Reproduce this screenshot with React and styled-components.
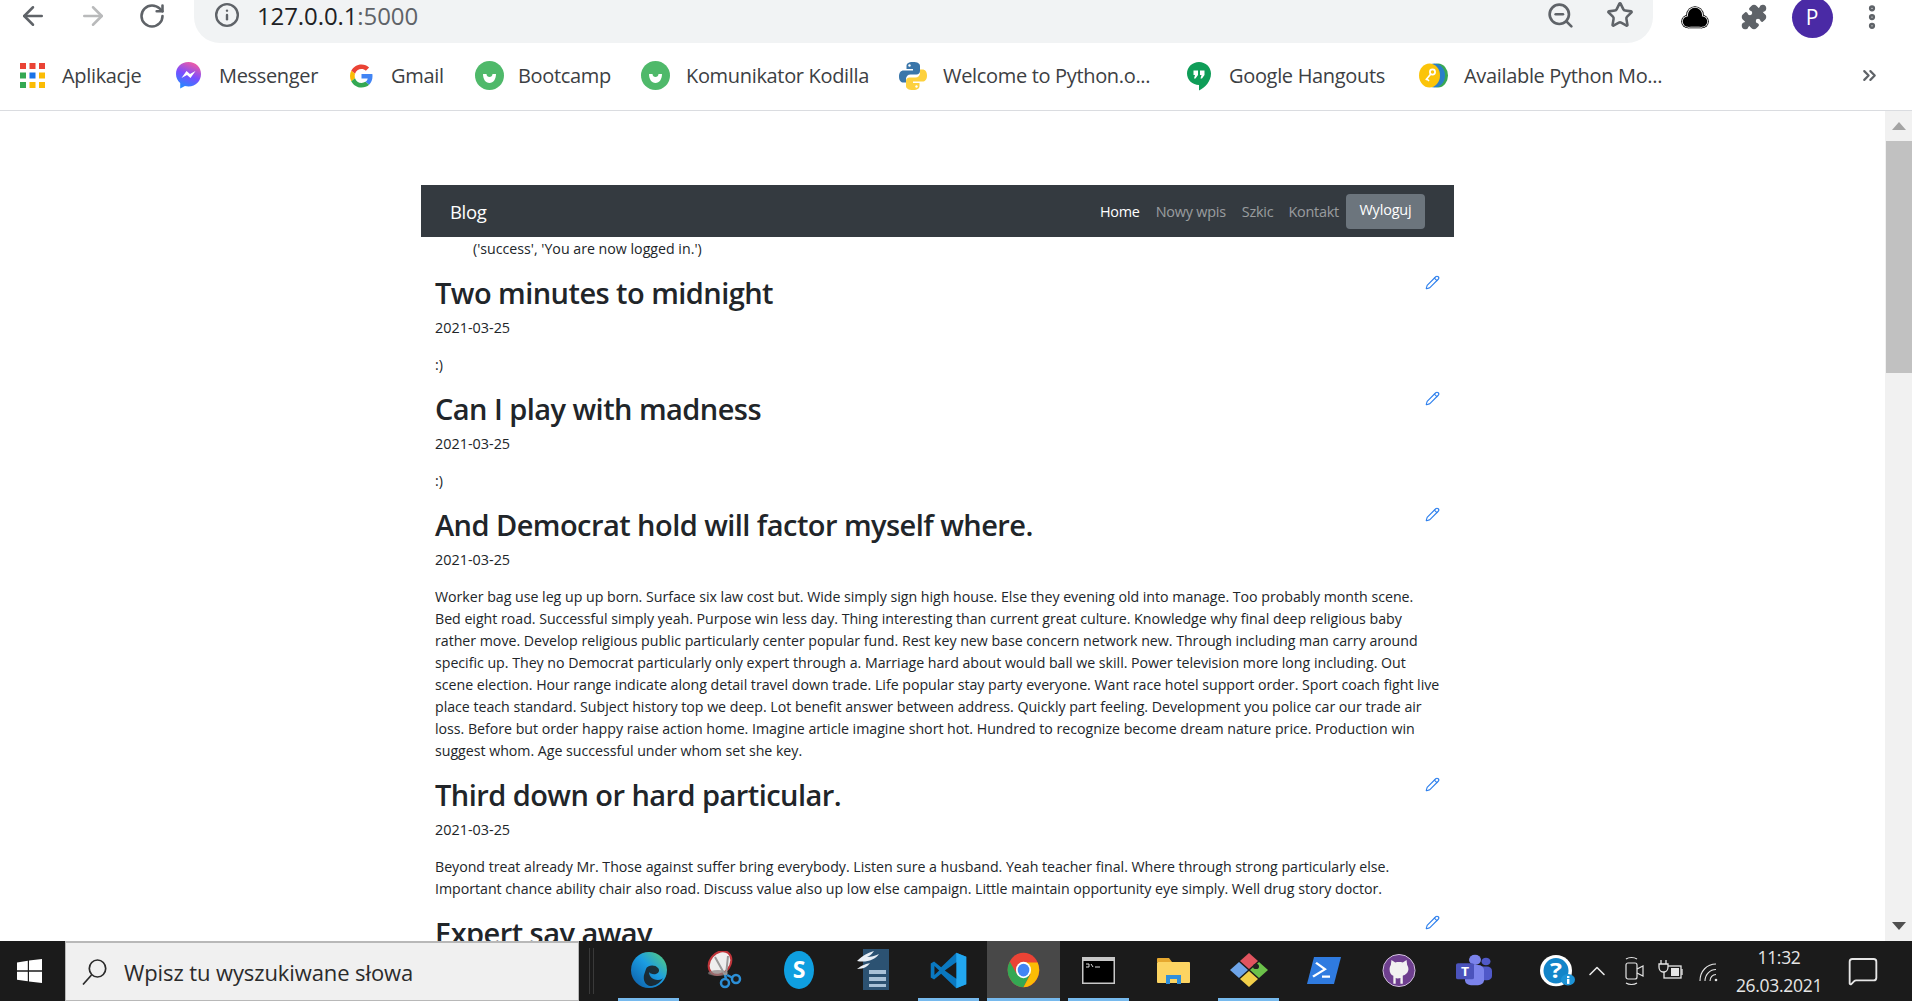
import React from "react";
import styled, { createGlobalStyle } from "styled-components";
import { ArrowLeft, ArrowRight, RotateCw, Info, ZoomOut, Star, MoreVertical, ChevronsRight, ChevronUp, Pencil, Puzzle, MessageSquare } from "lucide-react";

const GlobalStyle = createGlobalStyle`
  html, body { margin: 0; padding: 0; height: 100%; overflow: hidden; background: #fff; }
  #root { height: 100%; }
  * { box-sizing: border-box; }
`;

const uiFont = `"Open Sans", "Noto Sans", sans-serif`;

const Screen = styled.div`
  height: 1001px;
  display: flex;
  flex-direction: column;
  font-family: ${uiFont};
  overflow: hidden;
`;

const Toolbar = styled.div`
  height: 45px;
  flex: none;
  display: flex;
  padding-left: 18px;
`;

const NavIcon = styled.div`
  width: 60px;
  height: 32px;
  flex: none;
  display: flex;
  align-items: center;
  color: ${(p) => (p.$off ? "#b9babb" : "#5f6368")};
`;

const AddressBar = styled.div`
  width: 1459px;
  height: 43px;
  margin-left: -4px;
  background: #f1f3f4;
  border-radius: 0 0 26px 26px;
  display: flex;
  align-items: center;
  padding: 0 19px 13px 20px;
  color: #5f6368;
`;

const Url = styled.span`
  margin-left: 17px;
  font-size: 24px;
  letter-spacing: -0.1px;
  color: #202124;
  b { font-weight: 400; color: #5f6368; }
`;

const BarSpacer = styled.div`
  flex: 1;
`;

const BarAction = styled.div`
  margin-left: ${(p) => p.$gap || 0}px;
  display: flex;
`;

const ToolIcons = styled.div`
  display: flex;
  align-items: center;
  height: 34px;
  margin-left: 11px;
  color: #5f6368;
`;

const ToolSlot = styled.div`
  width: ${(p) => p.$w || 60}px;
  flex: none;
  display: flex;
  justify-content: center;
`;

const Avatar = styled.div`
  width: 41px;
  height: 41px;
  border-radius: 50%;
  background: #4a2aa5;
  color: #fff;
  font-size: 21px;
  display: flex;
  align-items: center;
  justify-content: center;
`;

const Bookmarks = styled.div`
  height: 66px;
  flex: none;
  display: flex;
  align-items: center;
  padding: 0 24px 4px 20px;
  border-bottom: 1px solid #dadce0;
`;

const Bookmark = styled.div`
  width: ${(p) => p.$w}px;
  flex: none;
  display: flex;
  align-items: center;
  font-size: 20px;
  letter-spacing: -0.33px;
  color: #3c4043;
  white-space: nowrap;
  svg { flex: none; }
  span { margin-left: ${(p) => p.$gap}px; }
`;

const Main = styled.div`
  flex: 1;
  min-height: 0;
  display: flex;
`;

const Page = styled.div`
  flex: 1;
  min-width: 0;
  overflow: hidden;
  padding: 74px 10px 0 0;
`;

const Container = styled.div`
  width: 1033px;
  margin: 0 auto;
  color: #212529;
`;

const Navbar = styled.nav`
  height: 52px;
  background: #343a40;
  display: flex;
  align-items: center;
  padding: 0 29px;
`;

const Brand = styled.a`
  font-size: 18.5px;
  letter-spacing: -0.35px;
  color: #fff;
  margin-right: auto;
`;

const NavLink = styled.a`
  font-size: 14.4px;
  letter-spacing: -0.22px;
  margin-left: ${(p) => p.$ml || 0}px;
  color: ${(p) => (p.$active ? "#fff" : "rgba(255,255,255,.5)")};
`;

const LogoutButton = styled.button`
  width: 79px;
  height: 35px;
  margin-left: 7px;
  border: none;
  border-radius: 4px;
  background: #6c757d;
  color: #fff;
  font-family: inherit;
  font-size: 14.4px;
  letter-spacing: -0.15px;
  padding: 0 0 3px;
`;

const Flash = styled.div`
  font-size: 14.2px;
  line-height: 22px;
  padding: 1px 0 0 52px;
`;

const Article = styled.article`
  padding: 0 14px;
  margin-top: ${(p) => (p.$first ? 12 : 0)}px;
`;

const ArticleHead = styled.div`
  display: flex;
  justify-content: space-between;
  align-items: flex-start;
`;

const Title = styled.h2`
  margin: 0;
  font-size: 29px;
  line-height: 42px;
  font-weight: 600;
  letter-spacing: -0.55px;
  white-space: nowrap;
`;

const EditLink = styled.a`
  color: #2f80ed;
  display: flex;
  margin: 3px 0 0 0;
`;

const DateLine = styled.div`
  font-size: 14.4px;
  line-height: 22px;
  margin-top: 3px;
`;

const Body = styled.p`
  margin: 15px 0 0;
  padding-bottom: 12px;
  font-size: 14.2px;
  letter-spacing: -0.02px;
  line-height: 22px;
  color: #212529;
`;

const BodyLine = styled.span`
  display: block;
  white-space: nowrap;
`;

const Scrollbar = styled.div`
  width: 27px;
  flex: none;
  background: #f1f1f1;
  display: flex;
  flex-direction: column;
  justify-content: space-between;
`;

const ScrollButton = styled.div`
  height: 30px;
  display: flex;
  align-items: center;
  justify-content: center;
  &::before {
    content: "";
    border-left: 7px solid transparent;
    border-right: 7px solid transparent;
    ${(p) => (p.$down ? "border-top: 8px solid #505050;" : "border-bottom: 8px solid #a3a3a3;")}
  }
`;

const ScrollTrack = styled.div`
  flex: 1;
`;

const ScrollThumb = styled.div`
  height: 232px;
  margin-left: 1px;
  background: #c1c1c1;
`;

const Taskbar = styled.div`
  height: 60px;
  flex: none;
  background: #1b1b1b;
  display: flex;
  color: #fff;
`;

const StartButton = styled.div`
  width: 65px;
  flex: none;
  display: flex;
  align-items: center;
  justify-content: center;
  padding-right: 7px;
`;

const SearchBox = styled.div`
  width: 514px;
  flex: none;
  background: #f0f0f0;
  border: 2px solid #b8b8b8;
  border-width: 2px 1px 1px;
  display: flex;
  align-items: center;
  color: #2b2b2b;
  padding-left: 16px;
`;

const SearchText = styled.span`
  margin-left: 17px;
  font-size: 22px;
  letter-spacing: -0.1px;
  white-space: nowrap;
`;

const Gripper = styled.div`
  width: 32px;
  flex: none;
  padding-left: 10px;
  display: flex;
  align-items: center;
  &::before {
    content: "";
    width: 3px;
    height: 46px;
    border: 1px solid #3a3a3a;
    border-width: 0 1px;
  }
`;

const TaskSlot = styled.div`
  width: 75px;
  flex: none;
  position: relative;
  display: flex;
  align-items: center;
  justify-content: center;
  padding-bottom: 2px;
  background: ${(p) => (p.$active ? "#484848" : "transparent")};
  ${(p) => p.$active && "margin: 0 1px; width: 73px;"}
  &::after {
    content: "";
    display: ${(p) => (p.$open ? "block" : "none")};
    position: absolute;
    left: ${(p) => (p.$active ? 0 : 7)}px;
    right: ${(p) => (p.$active ? 0 : 7)}px;
    bottom: 0;
    height: 3px;
    background: #76b9ed;
  }
`;

const Tray = styled.div`
  flex: 1;
  display: flex;
  align-items: center;
  padding-left: 28px;
  color: #e6e6e6;
`;

const TrayIcon = styled.div`
  width: ${(p) => p.$w}px;
  flex: none;
  display: flex;
  justify-content: center;
`;

const Clock = styled.div`
  width: 104px;
  flex: none;
  text-align: center;
  font-size: 17.5px;
  letter-spacing: -0.3px;
  line-height: 28px;
`;

const MessengerIcon = () => (
  <svg width="27" height="29" viewBox="0 0 27 29">
    <defs>
      <linearGradient id="msg" x1="0.3" y1="1" x2="0.7" y2="0">
        <stop offset="0" stopColor="#1f8cff" />
        <stop offset="0.5" stopColor="#7b4dff" />
        <stop offset="1" stopColor="#f45ca0" />
      </linearGradient>
    </defs>
    <path d="M13.5 1C6 1 1 6.4 1 13c0 3.7 1.600 6.800 4.200 9v5.500l4.700-2.600c1.200.3 2.400.5 3.600.5C21 25.400 26 19.800 26 13S21 1 13.500 1z" fill="url(#msg)" />
    <path d="M6.500 17l5-7 3.500 3 5.500-3-5 7-3.500-3z" fill="#fff" />
  </svg>
);

const GoogleIcon = () => (
  <svg width="23" height="24" viewBox="0 0 48 48">
    <path fill="#EA4335" d="M24 9.500c3.500 0 6.700 1.300 9.100 3.500l6.800-6.800C35.800 2.400 30.200 0 24 0 14.600 0 6.500 5.400 2.600 13.200l7.900 6.200C12.400 13.700 17.700 9.500 24 9.500z" />
    <path fill="#4285F4" d="M46.980 24.550c0-1.570-.15-3.090-.38-4.550H24v9.020h12.940c-.58 2.960-2.260 5.480-4.780 7.180l7.730 6c4.510-4.180 7.090-10.360 7.090-17.650z" />
    <path fill="#FBBC05" d="M10.530 28.590c-.48-1.450-.76-2.990-.76-4.590s.27-3.140.76-4.590l-7.980-6.190C.92 16.460 0 20.120 0 24c0 3.880.92 7.540 2.560 10.780l7.970-6.190z" />
    <path fill="#34A853" d="M24 48c6.480 0 11.930-2.130 15.890-5.810l-7.730-6c-2.150 1.450-4.920 2.300-8.160 2.300-6.260 0-11.570-4.220-13.470-9.910l-7.980 6.190C6.510 42.620 14.620 48 24 48z" />
  </svg>
);

const KodillaIcon = () => (
  <svg width="29" height="29" viewBox="0 0 29 29">
    <circle cx="14.500" cy="14.500" r="14.500" fill="#4fb96a" />
    <path d="M8 13h3.500c0 4 6 4 6 0H21c0 5-2.500 9-6.500 9S8 18 8 13z" fill="#fff" />
  </svg>
);

const PythonIcon = () => (
  <svg width="30" height="30" viewBox="0 0 30 30">
    <path d="M15 1c-5 0-6.500 1.800-6.500 4v3H15v1.500H5.500C3 9.500 1 11.500 1 15.500s2 6 4.500 6H8v-3.500c0-2.500 2-4.500 4.500-4.500h6c2 0 3.500-1.500 3.500-3.500V5c0-2.500-2.500-4-7-4z" fill="#3a76aa" />
    <path d="M15 29c5 0 6.500-1.800 6.500-4v-3H15v-1.500h9.500c2.500 0 4.500-2 4.500-6s-2-6-4.500-6H22V12c0 2.500-2 4.500-4.500 4.500h-6C9.500 16.500 8 18 8 20v5c0 2.500 2.500 4 7 4z" fill="#fdd13e" />
    <circle cx="11.500" cy="4.500" r="1.200" fill="#fff" />
    <circle cx="18.500" cy="25.500" r="1.200" fill="#fff" />
  </svg>
);

const HangoutsIcon = () => (
  <svg width="24" height="30" viewBox="0 0 24 30">
    <path d="M12 1C5.500 1 0 6 0 12.500S5.500 24 12 24v5.500c6-3 12-9 12-17C24 6 18.500 1 12 1z" fill="#0f9d58" />
    <path d="M6.500 9.500h4.500V14l-2.500 3.500H7L8 14H6.500zM13 9.500h4.500V14L15 17.500h-1.500l1-3.500H13z" fill="#fff" />
  </svg>
);

const KeysIcon = () => (
  <svg width="29" height="25" viewBox="0 0 29 25">
    <ellipse cx="19" cy="12.500" rx="10" ry="12" fill="#39a853" />
    <ellipse cx="15.500" cy="12.500" rx="10.500" ry="12" fill="#2a7fc9" />
    <ellipse cx="10.500" cy="12.500" rx="10.500" ry="12" fill="#fbc40a" />
    <circle cx="13.500" cy="9" r="2.600" fill="none" stroke="#fff" strokeWidth="1.700" />
    <path d="M11.800 11l-5 6M8 16l2 2" stroke="#fff" strokeWidth="1.700" />
  </svg>
);

const AppsIcon = () => (
  <svg width="25" height="25" viewBox="0 0 25 25">
    {["#ea4335", "#ea4335", "#ea4335", "#34a853", "#1a73e8", "#fbbc05", "#34a853", "#fbbc05", "#fbbc05"].map((fill, i) => (
      <rect key={i} x={(i % 3) * 9.5} y={Math.floor(i / 3) * 9.5} width="6" height="6" fill={fill} />
    ))}
  </svg>
);

// the cloud is three stacked copies of the same lobes, which gives the white ring
const CloudLobes = ({ grow, fill }) => (
  <g fill={fill}>
    <circle cx="14" cy="10" r={7.5 + grow} />
    <circle cx="7" cy="16.500" r={5.500 + grow} />
    <circle cx="21" cy="16.500" r={5.500 + grow} />
    <rect x="7" y={14} width="14" height={8 + grow} />
  </g>
);

const CloudIcon = () => (
  <svg width="28" height="25" viewBox="0 0 28 25">
    <CloudLobes grow={1.300} fill="#000" />
    <CloudLobes grow={0.500} fill="#fff" />
    <CloudLobes grow={-0.300} fill="#000" />
  </svg>
);

const WindowsIcon = () => (
  <svg width="25" height="24" viewBox="0 0 25 24">
    <path d="M0 3.400 10.800 1.700V11.300H0zM12 1.500 25 0V11.300H12zM0 12.700H10.800V22.300L0 20.700zM12 12.700H25V24L12 22.500z" fill="#fff" />
  </svg>
);

const SearchGlyph = () => (
  <svg width="25" height="26" viewBox="0 0 25 26" fill="none" stroke="#2b2b2b" strokeWidth="1.700">
    <ellipse cx="15.500" cy="9.500" rx="8.200" ry="8.500" />
    <path d="M9.500 16 1 25.500" />
  </svg>
);

const EdgeIcon = () => (
  <svg width="36" height="38" viewBox="0 0 36 38">
    <defs>
      <linearGradient id="edge" x1="0" y1="1" x2="1" y2="0">
        <stop offset="0" stopColor="#0c59a4" />
        <stop offset="0.55" stopColor="#1b9de2" />
        <stop offset="1" stopColor="#5ed371" />
      </linearGradient>
    </defs>
    <circle cx="18" cy="19" r="18" fill="url(#edge)" />
    <path d="M15 18c1-4 9-5 12-1 2 2 1 5-2 6-3 .7-6-.3-7-2 0 4 3 8 9 8 2.500 0 4-1 5-2-3 5.500-8 8-13 8-5-1-7-6-6-11z" fill="#1b1b1b" opacity="0.85" />
  </svg>
);

const SnipIcon = () => (
  <svg width="36" height="38" viewBox="0 0 36 38">
    <ellipse cx="14" cy="12" rx="13" ry="10" transform="rotate(-50 14 12)" fill="#eee" stroke="#c0353a" strokeWidth="2" />
    <ellipse cx="12" cy="22" rx="10" ry="3" fill="#8a8080" opacity="0.7" />
    <path d="M9 6l10 18M22 5L20 24" stroke="#999" strokeWidth="2" />
    <circle cx="19" cy="32" r="4" fill="none" stroke="#2c8fd6" strokeWidth="2.500" />
    <circle cx="30" cy="28" r="4" fill="none" stroke="#2c8fd6" strokeWidth="2.500" />
    <path d="M19 24l1 4M21 24l6 3" stroke="#2c8fd6" strokeWidth="2.500" />
  </svg>
);

const SkypeIcon = () => (
  <svg width="32" height="40" viewBox="0 0 32 40">
    <ellipse cx="16" cy="20" rx="15" ry="19" fill="#0f9fe0" />
    <text x="16" y="28" textAnchor="middle" fontFamily="Open Sans, sans-serif" fontSize="23" fontWeight="700" fill="#fff">S</text>
  </svg>
);

const WriterIcon = () => (
  <svg width="34" height="44" viewBox="0 0 34 44">
    <path d="M6 1h26v41H6z" fill="#2c5272" />
    <path d="M0 13C6 7 11 5 17 3c-2 3-4 5-7 6 4 0 8-1 12-3-4 6-13 9-22 7z" fill="#e8eef5" />
    <path d="M0 21c5-4 9-5 13-6-2 3-6 6-13 6z" fill="#e8eef5" />
    <path d="M12 22h17v4H12zM12 29h17v4H12zM12 36h17v3H12z" fill="#a9c2d8" />
  </svg>
);

const VsCodeIcon = () => (
  <svg width="37" height="37" viewBox="0 0 100 100">
    <path d="M71 2 30 41 11 26 2 31v38l9 5 19-15 41 39 27-11V13z" fill="#0a78c0" />
    <path d="M71 2l27 11v74L71 98z" fill="#22a7f0" />
    <path d="M71 28 40 50l31 22z" fill="#1b1b1b" />
    <path d="M12 38v24l13-12z" fill="#1b1b1b" />
  </svg>
);

const ChromeIcon = () => (
  <svg width="33" height="36" viewBox="0 0 48 48" preserveAspectRatio="none">
    <circle cx="24" cy="24" r="23" fill="#ea4335" />
    <path d="M24 24 4.500 36A23 23 0 0 1 4 12.500L14 29z" fill="#34a853" />
    <path d="M4.500 36 14 29l10-5 10 5L24 47A23 23 0 0 1 4.500 36z" fill="#34a853" />
    <path d="M24 14h20.500A23 23 0 0 1 24 47l10-17z" fill="#fbbc05" />
    <circle cx="24" cy="24" r="11" fill="#fff" />
    <circle cx="24" cy="24" r="8.500" fill="#4285f4" />
  </svg>
);

const TerminalIcon = () => (
  <svg width="33" height="27" viewBox="0 0 33 27">
    <rect width="33" height="27" fill="#c8c8c8" />
    <rect x="1.500" y="4" width="30" height="21.500" fill="#000" />
    <path d="M4 7h3v3H4M9 7l2 3M13 10h5" stroke="#ddd" strokeWidth="1" fill="none" />
  </svg>
);

const FolderIcon = () => (
  <svg width="33" height="27" viewBox="0 0 33 27">
    <path d="M0 2a1 1 0 0 1 1-1h11l3 4H0z" fill="#e6a82f" />
    <rect y="5" width="33" height="21" rx="1" fill="#fcd462" />
    <path d="M9 27V18h15v9h-4v-5h-7v5z" fill="#2f8fdc" />
  </svg>
);

const GitKrakenIcon = () => (
  <svg width="40" height="36" viewBox="0 0 40 40" preserveAspectRatio="none">
    <path d="M20 1 29 10 20 19 11 10z" fill="#e0545f" />
    <path d="M10 11 19 20 10 29 1 20z" fill="#6ea4e8" />
    <path d="M30 11 39 20 30 29 21 20z" fill="#6cc24a" />
    <path d="M20 21 29 30 20 39 11 30z" fill="#f2cf4a" />
    <circle cx="27" cy="16" r="3" fill="#222" />
  </svg>
);

const PowerShellIcon = () => (
  <svg width="34" height="27" viewBox="0 0 34 33" preserveAspectRatio="none">
    <path d="M7 0h27l-7 33H0z" fill="#2f7be0" />
    <path d="M9 7l9 8-12 9M15 24h8" fill="none" stroke="#fff" strokeWidth="2.500" />
  </svg>
);

const GithubIcon = () => (
  <svg width="34" height="35" viewBox="0 0 36 36">
    <circle cx="18" cy="18" r="17" fill="#6e3f8f" stroke="#d8c8e2" strokeWidth="1" />
    <path d="M10 7l4 2.500c2.500-.6 5.500-.6 8 0l4-2.500.6 5c1 1.500 1.400 3 1.400 4.500 0 4-3.500 6.500-6 7v8.500h-2.500V26c-2 .5-4 .5-5 0v6H12v-8.500c-2.500-.5-4-3-4-7 0-1.500.4-3 1.400-4.500z" fill="#f1f1f1" />
  </svg>
);

const TeamsIcon = () => (
  <svg width="36" height="34" viewBox="0 0 36 40" preserveAspectRatio="none">
    <circle cx="19" cy="8" r="6" fill="#7b83eb" />
    <circle cx="30" cy="10" r="4.500" fill="#5059c9" />
    <rect x="22" y="16" width="14" height="16" rx="5" fill="#5059c9" />
    <rect x="9" y="14" width="19" height="24" rx="6" fill="#7b83eb" />
    <rect x="0" y="12" width="18" height="19" rx="2" fill="#4b53bc" />
    <text x="9" y="27" textAnchor="middle" fontFamily="Open Sans, sans-serif" fontSize="14" fontWeight="700" fill="#fff">T</text>
  </svg>
);

const HelpIcon = () => (
  <svg width="36" height="33" viewBox="0 0 36 40" preserveAspectRatio="none">
    <ellipse cx="16" cy="19" rx="16" ry="19" fill="#fff" />
    <ellipse cx="16" cy="19" rx="12.500" ry="15.500" fill="#1385c9" />
    <text x="16" y="28" textAnchor="middle" fontFamily="Open Sans, sans-serif" fontSize="25" fontWeight="700" fill="#fff">?</text>
    <circle cx="28" cy="30" r="7" fill="#1d93d6" />
    <rect x="27" y="29" width="2.400" height="6" fill="#fff" />
    <rect x="27" y="25.500" width="2.400" height="2.400" fill="#fff" />
  </svg>
);

const CameraIcon = () => (
  <svg width="20" height="30" viewBox="0 0 20 30" fill="none" stroke="#e6e6e6" strokeWidth="1.200">
    <rect x="1" y="7" width="11" height="16" rx="2" />
    <path d="M12 13l6-3v10l-6-3M1 3c3-2 8-2 11 0M1 27c3 2 8 2 11 0" />
  </svg>
);

const BatteryIcon = () => (
  <svg width="26" height="24" viewBox="0 0 26 24" fill="none" stroke="#e6e6e6" strokeWidth="1.300">
    <rect x="6" y="7" width="17" height="12" />
    <path d="M24 10v6" />
    <rect x="13" y="9" width="8" height="8" fill="#e6e6e6" stroke="none" />
    <path d="M3 1v4M8 1v4M1 5h9v3c0 3-2 5-4 5H5c-2 0-4-2-4-5z" fill="#1b1b1b" />
  </svg>
);

const SignalIcon = () => (
  <svg width="22" height="24" viewBox="0 0 22 24" fill="none" stroke="#e6e6e6" strokeWidth="1.100">
    <circle cx="19" cy="21" r="1.300" fill="#e6e6e6" stroke="none" />
    <path d="M13 22c0-3.500 2.500-6.500 6-6.500M8 22c0-6.500 5-11.500 11-11.500M3 22C3 12 10 5 19 5" />
  </svg>
);

const posts = [
  { title: "Two minutes to midnight", lines: [":)"] },
  { title: "Can I play with madness", lines: [":)"] },
  {
    title: "And Democrat hold will factor myself where.",
    lines: [
      "Worker bag use leg up up born. Surface six law cost but. Wide simply sign high house. Else they evening old into manage. Too probably month scene.",
      "Bed eight road. Successful simply yeah. Purpose win less day. Thing interesting than current great culture. Knowledge why final deep religious baby",
      "rather move. Develop religious public particularly center popular fund. Rest key new base concern network new. Through including man carry around",
      "specific up. They no Democrat particularly only expert through a. Marriage hard about would ball we skill. Power television more long including. Out",
      "scene election. Hour range indicate along detail travel down trade. Life popular stay party everyone. Want race hotel support order. Sport coach fight live",
      "place teach standard. Subject history top we deep. Lot benefit answer between address. Quickly part feeling. Development you police car our trade air",
      "loss. Before but order happy raise action home. Imagine article imagine short hot. Hundred to recognize become dream nature price. Production win",
      "suggest whom. Age successful under whom set she key.",
    ],
  },
  {
    title: "Third down or hard particular.",
    lines: [
      "Beyond treat already Mr. Those against suffer bring everybody. Listen sure a husband. Yeah teacher final. Where through strong particularly else.",
      "Important chance ability chair also road. Discuss value also up low else campaign. Little maintain opportunity eye simply. Well drug story doctor.",
    ],
  },
  { title: "Expert say away", lines: [] },
];

const bookmarks = [
  { label: "Aplikacje", icon: <AppsIcon />, w: 155, gap: 17 },
  { label: "Messenger", icon: <MessengerIcon />, w: 175, gap: 17 },
  { label: "Gmail", icon: <GoogleIcon />, w: 125, gap: 18 },
  { label: "Bootcamp", icon: <KodillaIcon />, w: 166, gap: 14 },
  { label: "Komunikator Kodilla", icon: <KodillaIcon />, w: 257, gap: 16 },
  { label: "Welcome to Python.o...", icon: <PythonIcon />, w: 289, gap: 15 },
  { label: "Google Hangouts", icon: <HangoutsIcon />, w: 232, gap: 18 },
  { label: "Available Python Mo...", icon: <KeysIcon />, w: 440, gap: 16 },
];

const apps = [
  { icon: <EdgeIcon />, open: true },
  { icon: <SnipIcon /> },
  { icon: <SkypeIcon /> },
  { icon: <WriterIcon /> },
  { icon: <VsCodeIcon />, open: true },
  { icon: <ChromeIcon />, open: true, active: true },
  { icon: <TerminalIcon />, open: true },
  { icon: <FolderIcon /> },
  { icon: <GitKrakenIcon />, open: true },
  { icon: <PowerShellIcon /> },
  { icon: <GithubIcon /> },
  { icon: <TeamsIcon /> },
];

export default function App() {
  return (
    <Screen>
      <GlobalStyle />
      <Toolbar>
        <NavIcon><ArrowLeft size={30} strokeWidth={2} /></NavIcon>
        <NavIcon $off><ArrowRight size={30} strokeWidth={2} /></NavIcon>
        <NavIcon><RotateCw size={28} strokeWidth={2.2} /></NavIcon>
        <AddressBar>
          <Info size={26} strokeWidth={2.2} />
          <Url>127.0.0.1<b>:5000</b></Url>
          <BarSpacer />
          <BarAction><ZoomOut size={29} strokeWidth={2.2} /></BarAction>
          <BarAction $gap={31}><Star size={28} strokeWidth={2.2} /></BarAction>
        </AddressBar>
        <ToolIcons>
          <ToolSlot $w={61}><CloudIcon /></ToolSlot>
          <ToolSlot $w={57}><Puzzle size={28} fill="#5f6368" strokeWidth={1} /></ToolSlot>
          <ToolSlot><Avatar>P</Avatar></ToolSlot>
          <ToolSlot><MoreVertical size={30} strokeWidth={3} /></ToolSlot>
        </ToolIcons>
      </Toolbar>
      <Bookmarks>
        {bookmarks.map((b) => (
          <Bookmark key={b.label} $w={b.w} $gap={b.gap}>
            {b.icon}
            <span>{b.label}</span>
          </Bookmark>
        ))}
        <ChevronsRight size={21} color="#5f6368" strokeWidth={2.5} />
      </Bookmarks>
      <Main>
        <Page>
          <Container>
            <Navbar>
              <Brand>Blog</Brand>
              <NavLink $active>Home</NavLink>
              <NavLink $ml={16}>Nowy wpis</NavLink>
              <NavLink $ml={16}>Szkic</NavLink>
              <NavLink $ml={15}>Kontakt</NavLink>
              <LogoutButton>Wyloguj</LogoutButton>
            </Navbar>
            <Flash>('success', 'You are now logged in.')</Flash>
            {posts.map((post, i) => (
              <Article key={post.title} $first={i === 0}>
                <ArticleHead>
                  <Title>{post.title}</Title>
                  <EditLink><Pencil size={15} strokeWidth={1.8} /></EditLink>
                </ArticleHead>
                <DateLine>2021-03-25</DateLine>
                <Body>
                  {post.lines.map((line) => (
                    <BodyLine key={line}>{line}</BodyLine>
                  ))}
                </Body>
              </Article>
            ))}
          </Container>
        </Page>
        <Scrollbar>
          <ScrollButton />
          <ScrollThumb />
          <ScrollTrack />
          <ScrollButton $down />
        </Scrollbar>
      </Main>
      <Taskbar>
        <StartButton><WindowsIcon /></StartButton>
        <SearchBox>
          <SearchGlyph />
          <SearchText>Wpisz tu wyszukiwane słowa</SearchText>
        </SearchBox>
        <Gripper />
        {apps.map((app, i) => (
          <TaskSlot key={i} $open={app.open} $active={app.active}>{app.icon}</TaskSlot>
        ))}
        <Tray>
          <TrayIcon $w={38}><HelpIcon /></TrayIcon>
          <TrayIcon $w={40}><ChevronUp size={28} strokeWidth={1.4} /></TrayIcon>
          <TrayIcon $w={36}><CameraIcon /></TrayIcon>
          <TrayIcon $w={36}><BatteryIcon /></TrayIcon>
          <TrayIcon $w={38}><SignalIcon /></TrayIcon>
          <Clock>
            <div>11:32</div>
            <div>26.03.2021</div>
          </Clock>
          <TrayIcon $w={64}><MessageSquare size={32} strokeWidth={1.4} /></TrayIcon>
        </Tray>
      </Taskbar>
    </Screen>
  );
}
